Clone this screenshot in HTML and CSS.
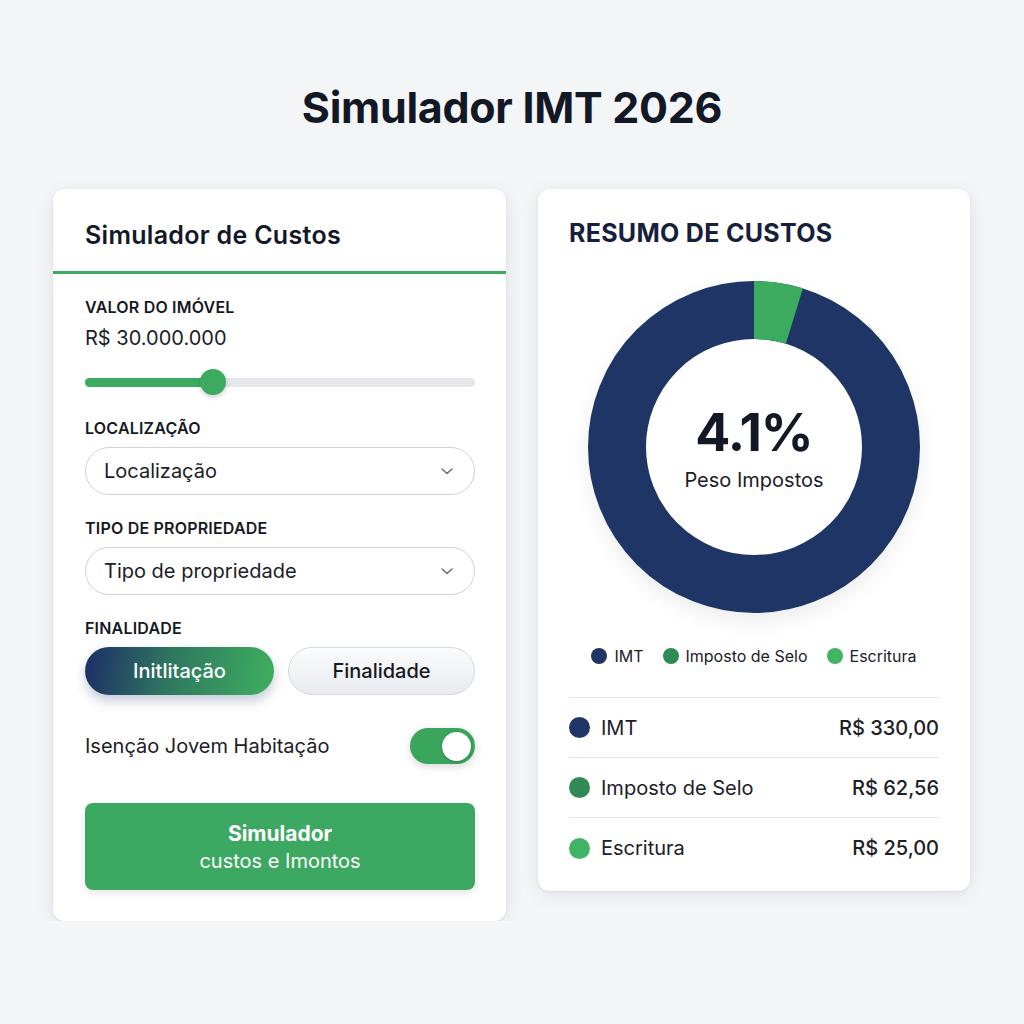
FILE: index.html
```html
<!DOCTYPE html>
<html lang="pt">
<head>
    <meta charset="UTF-8">
    <meta name="viewport" content="width=device-width, initial-scale=1.0">
    <title>Simulador IMT 2026</title>
    <link rel="stylesheet" href="styles.css">
</head>
<body>

    <div class="page">
        <h1>Simulador IMT 2026</h1>

        <div class="columns">
            <!-- Form card -->
            <section class="card sim-card">
                <div class="card-header">
                    <h2>Simulador de Custos</h2>
                </div>

                <div class="card-body">
                    <div class="field">
                        <label>VALOR DO IMÓVEL</label>
                        <div class="amount">R$ 30.000.000</div>
                        <div class="slider">
                            <div class="slider-fill"></div>
                            <div class="slider-thumb"></div>
                        </div>
                    </div>

                    <div class="field">
                        <label>LOCALIZAÇÃO</label>
                        <div class="select">
                            <span>Localização</span>
                            <svg class="chevron" width="16" height="14" viewBox="0 0 16 14"><path d="M3 5l5 4.5 5-4.5" fill="none" stroke="#6b7280" stroke-width="1.6" stroke-linecap="round" stroke-linejoin="round"/></svg>
                        </div>
                    </div>

                    <div class="field">
                        <label>TIPO DE PROPRIEDADE</label>
                        <div class="select">
                            <span>Tipo de propriedade</span>
                            <svg class="chevron" width="16" height="14" viewBox="0 0 16 14"><path d="M3 5l5 4.5 5-4.5" fill="none" stroke="#6b7280" stroke-width="1.6" stroke-linecap="round" stroke-linejoin="round"/></svg>
                        </div>
                    </div>

                    <div class="field">
                        <label>FINALIDADE</label>
                        <div class="segmented">
                            <button class="seg active">Initlitação</button>
                            <button class="seg">Finalidade</button>
                        </div>
                    </div>

                    <div class="toggle-row">
                        <span>Isenção Jovem Habitação</span>
                        <div class="toggle"><div class="knob"></div></div>
                    </div>

                    <button class="cta">
                        <strong>Simulador</strong>
                        <span>custos e Imontos</span>
                    </button>
                </div>
            </section>

            <!-- Summary card -->
            <section class="card summary-card">
                <h2 class="summary-title">RESUMO DE CUSTOS</h2>

                <div class="donut">
                    <svg width="332" height="332" viewBox="0 0 332 332">
                        <circle cx="166" cy="166" r="137" fill="none" stroke="#1f3566" stroke-width="58"/>
                        <circle cx="166" cy="166" r="137" fill="none" stroke="#3dab5f" stroke-width="58"
                                stroke-dasharray="41 900" transform="rotate(-90 166 166)"/>
                    </svg>
                    <div class="donut-center">
                        <div class="pct">4.1%</div>
                        <div class="pct-label">Peso Impostos</div>
                    </div>
                </div>

                <div class="legend">
                    <span><i class="dot imt"></i>IMT</span>
                    <span><i class="dot selo"></i>Imposto de Selo</span>
                    <span><i class="dot escritura"></i>Escritura</span>
                </div>

                <ul class="cost-list">
                    <li><i class="dot imt"></i><span class="name">IMT</span><span class="value">R$ 330,00</span></li>
                    <li><i class="dot selo"></i><span class="name">Imposto de Selo</span><span class="value">R$ 62,56</span></li>
                    <li><i class="dot escritura"></i><span class="name">Escritura</span><span class="value">R$ 25,00</span></li>
                </ul>
            </section>
        </div>
    </div>

</body>
</html>
```

FILE: styles.css
```css
/* Reset */
* {
    margin: 0;
    padding: 0;
    box-sizing: border-box;
}

body {
    font-family: 'Inter', 'Liberation Sans', sans-serif;
    background-color: #f4f5f7;
    color: #16191f;
}

.page {
    padding-top: 80px;
}

h1 {
    text-align: center;
    font-size: 43px;
    font-weight: 700;
    color: #121826;
    letter-spacing: -0.3px;
    line-height: 54px;
}

.columns {
    display: flex;
    gap: 32px;
    padding: 55px 0 0 53px;
    align-items: flex-start;
}

/* Cards */
.card {
    background-color: #fff;
    border-radius: 12px;
    box-shadow: 0 4px 20px rgba(20, 30, 50, 0.08), 0 1px 3px rgba(20, 30, 50, 0.06);
}

.sim-card {
    width: 453px;
}

.card-header {
    height: 85px;
    padding: 0 32px;
    display: flex;
    align-items: center;
    border-bottom: 3px solid #3dab5f;
}

.card-header h2 {
    font-size: 25px;
    font-weight: 600;
    letter-spacing: 0.3px;
    color: #121826;
    padding-top: 9px;
}

.card-body {
    padding: 23px 31px 31px 32px;
    display: flex;
    flex-direction: column;
}

.field {
    display: flex;
    flex-direction: column;
    gap: 9px;
    margin-bottom: 23px;
}

.field label {
    font-size: 16px;
    font-weight: 600;
    letter-spacing: 0.2px;
    line-height: 20px;
    color: #16191f;
}

.amount {
    font-size: 20px;
    line-height: 24px;
    color: #1d2027;
    margin-bottom: 10px;
}

/* Slider */
.slider {
    position: relative;
    height: 26px;
    display: flex;
    align-items: center;
}

.slider::before {
    content: '';
    width: 100%;
    height: 9px;
    border-radius: 5px;
    background-color: #e5e7eb;
}

.slider-fill {
    position: absolute;
    left: 0;
    top: 8.5px;
    width: 128px;
    height: 9px;
    border-radius: 5px;
    background-color: #3dab5f;
}

.slider-thumb {
    position: absolute;
    left: 115px;
    top: 0;
    width: 26px;
    height: 26px;
    border-radius: 50%;
    background-color: #3dab5f;
    box-shadow: 0 2px 5px rgba(0, 0, 0, 0.2);
}

/* Select boxes */
.select {
    height: 48px;
    border: 1px solid #cfd3da;
    border-radius: 24px;
    padding: 0 19px 0 18px;
    display: flex;
    align-items: center;
    justify-content: space-between;
    font-size: 20px;
    color: #1d2027;
}

/* Finalidade buttons */
.segmented {
    display: grid;
    grid-template-columns: 189px 1fr;
    gap: 14px;
}

.seg {
    height: 48px;
    border-radius: 24px;
    font-family: inherit;
    font-size: 20px;
    font-weight: 500;
    cursor: pointer;
    border: 1px solid #d6d9de;
    background: linear-gradient(180deg, #fafbfc, #e9ebef);
    color: #16191f;
}

.seg.active {
    border: none;
    color: #fff;
    font-weight: 500;
    background: linear-gradient(100deg, #1f3566 5%, #2f7760 45%, #3dab5f 95%);
    box-shadow: 0 6px 12px rgba(31, 53, 102, 0.25);
}

/* Toggle */
.toggle-row {
    display: flex;
    align-items: center;
    justify-content: space-between;
    margin-top: 10px;
    font-size: 20px;
    color: #1d2027;
}

.toggle {
    width: 65px;
    height: 36px;
    border-radius: 18px;
    background-color: #3aa55c;
    display: flex;
    align-items: center;
    justify-content: flex-end;
    padding-right: 4px;
    box-shadow: 0 3px 8px rgba(0, 0, 0, 0.15);
}

.knob {
    width: 29px;
    height: 29px;
    border-radius: 50%;
    background-color: #fff;
    box-shadow: 0 1px 3px rgba(0, 0, 0, 0.25);
}

/* Main button */
.cta {
    margin-top: 39px;
    height: 87px;
    border: none;
    border-radius: 8px;
    background-color: #3ca862;
    color: #fff;
    font-family: inherit;
    display: flex;
    flex-direction: column;
    align-items: center;
    justify-content: center;
    gap: 3px;
    box-shadow: 0 3px 8px rgba(0, 0, 0, 0.1);
    cursor: pointer;
}

.cta strong {
    font-size: 21px;
    font-weight: 700;
}

.cta span {
    font-size: 20px;
    font-weight: 400;
}

/* Summary card */
.summary-card {
    width: 432px;
    padding: 30px 31px 13px 31px;
}

.summary-title {
    font-size: 25px;
    font-weight: 700;
    letter-spacing: 0.3px;
    color: #16203a;
    line-height: 28px;
}

.donut {
    position: relative;
    width: 332px;
    height: 332px;
    margin: 34px auto 0;
    border-radius: 50%;
    box-shadow: 0 8px 20px rgba(0, 0, 0, 0.08);
}

.donut svg {
    display: block;
}

.donut-center {
    position: absolute;
    inset: 0;
    display: flex;
    flex-direction: column;
    align-items: center;
    justify-content: center;
    padding-top: 2px;
}

.pct {
    font-size: 52px;
    font-weight: 700;
    color: #121826;
    letter-spacing: -1px;
    line-height: 58px;
}

.pct-label {
    font-size: 20px;
    color: #1d2027;
    margin-top: 6px;
}

.legend {
    display: flex;
    justify-content: center;
    gap: 19px;
    margin-top: 33px;
    font-size: 16px;
    color: #1d2027;
}

.legend span {
    display: flex;
    align-items: center;
    gap: 7px;
}

.legend .dot {
    width: 16px;
    height: 16px;
}

.dot {
    display: inline-block;
    border-radius: 50%;
}

.dot.imt { background-color: #1f3566; }
.dot.selo { background-color: #2f8a55; }
.dot.escritura { background-color: #3fb465; }

.cost-list {
    list-style: none;
    margin-top: 31px;
    border-top: 1px solid #e3e5e9;
}

.cost-list li {
    height: 60px;
    display: flex;
    align-items: center;
    font-size: 20px;
    color: #1d2027;
    border-bottom: 1px solid #e3e5e9;
}

.cost-list li:last-child {
    border-bottom: none;
}

.cost-list .dot {
    width: 21px;
    height: 21px;
    margin-right: 11px;
}

.cost-list .name {
    flex: 1;
}

.cost-list .value {
    font-weight: 500;
}
```
